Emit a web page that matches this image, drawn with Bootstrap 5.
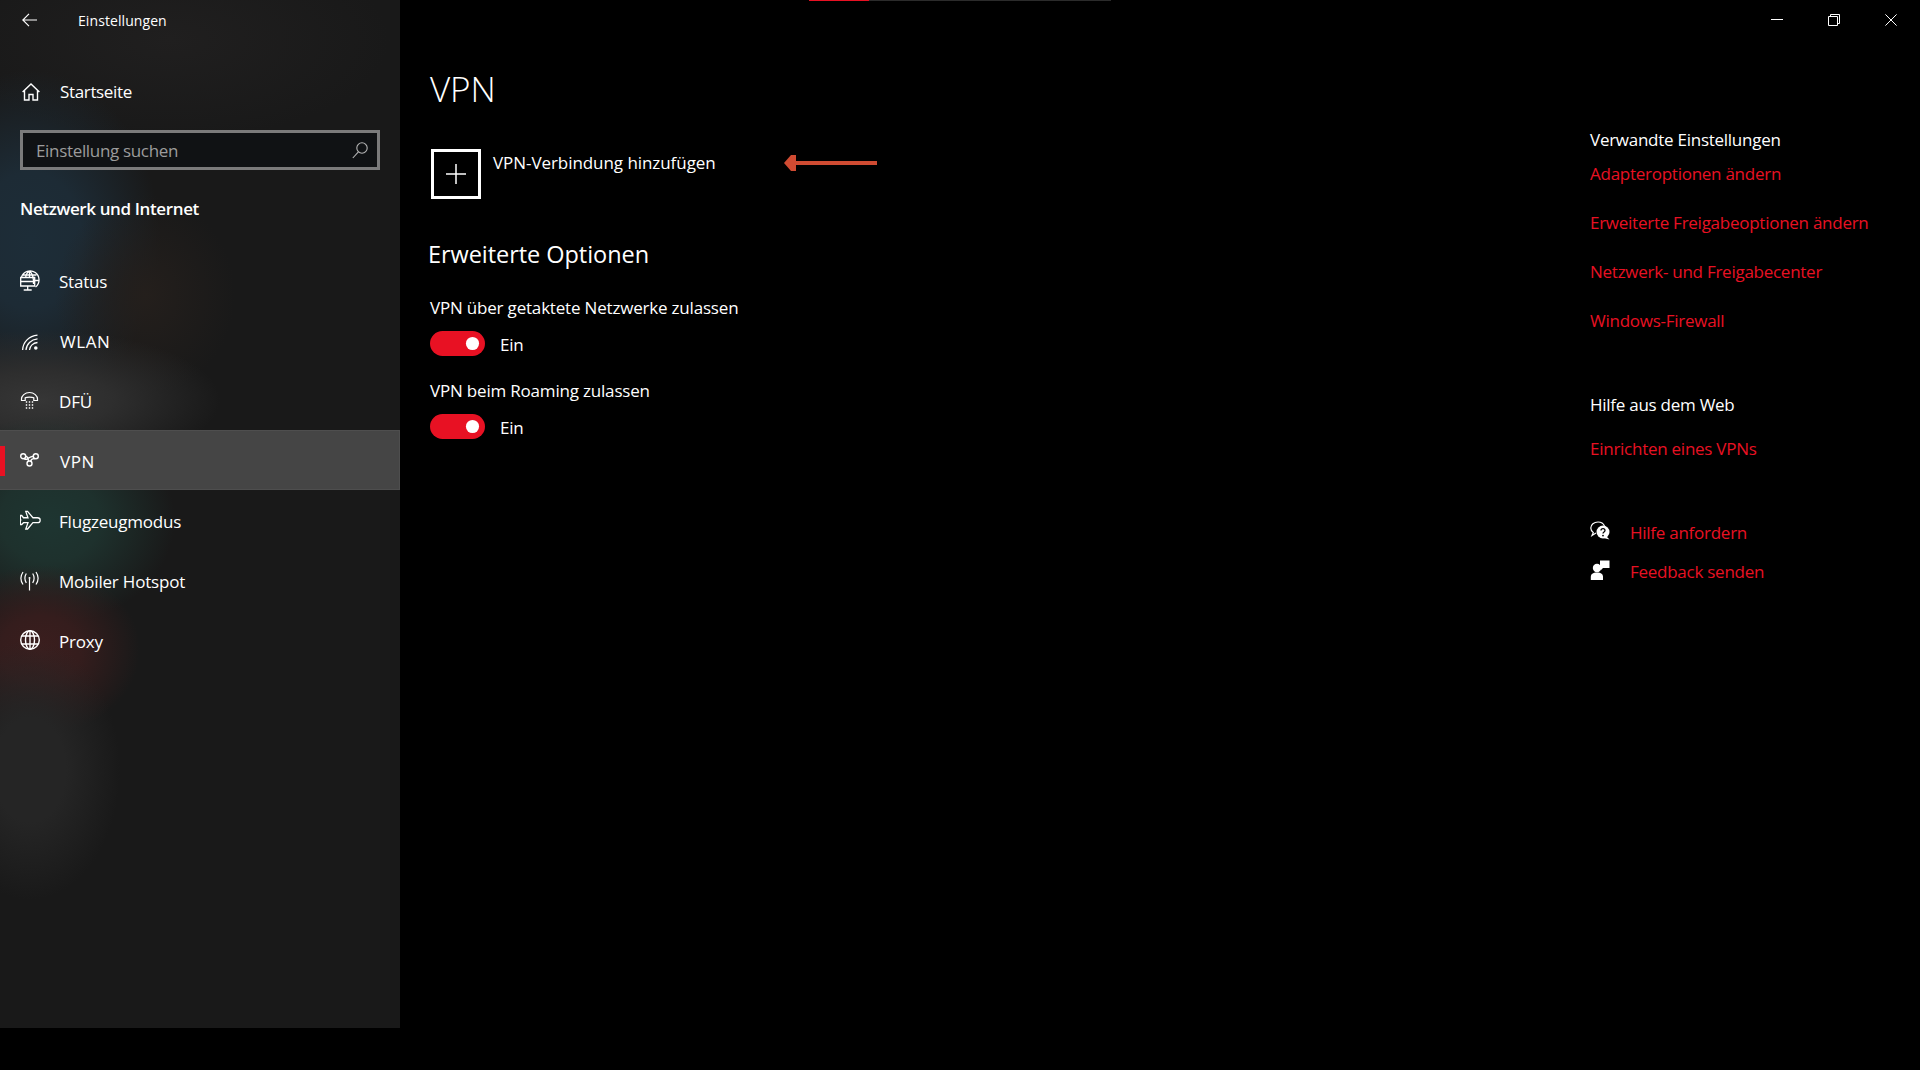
<!doctype html>
<html lang="de">
<head>
<meta charset="utf-8">
<title>Einstellungen</title>
<link href="https://cdn.jsdelivr.net/npm/bootstrap@5.3.0/dist/css/bootstrap.min.css" rel="stylesheet">
<style>
html,body{height:100%}
body{background:#000;color:#fff;font-family:"Open Sans","Noto Sans",sans-serif;font-size:17px;overflow:hidden;letter-spacing:-.19px}
svg{display:block;flex:none;fill:none;stroke:#fff}
.win-shell{height:1070px;position:relative}
.side-pane{width:400px;height:1028px;flex:none;background-color:#191919;background-image:
 radial-gradient(ellipse 90px 130px at 30px 770px,#252525 0,#252525 40%,rgba(38,38,38,0) 100%),
 radial-gradient(ellipse 100px 85px at 40px 650px,#3b1e1e 0,#351d1d 40%,rgba(50,28,28,0) 100%),
 radial-gradient(ellipse 125px 105px at 50px 520px,#1e3531 0,#1e312d 40%,rgba(30,48,44,0) 100%),
 radial-gradient(ellipse 180px 70px at 40px 400px,#363636 0,#2e2e2e 40%,rgba(48,48,48,0) 100%),
 radial-gradient(ellipse 90px 100px at 145px 295px,#241f1c 0,rgba(36,31,28,0) 100%),
 radial-gradient(ellipse 130px 170px at 30px 240px,#1d2d38 0,#1d2b35 40%,rgba(29,43,53,0) 100%),
 radial-gradient(ellipse 220px 100px at 170px 40px,#201f1f 0,rgba(32,31,31,0) 100%)}
.top-row{height:40px;padding-left:22px}
.app-name{font-size:14px;margin-left:41px;letter-spacing:.08px}
.home-link{height:60px;margin-top:22px;padding-left:22px;color:#fff;text-decoration:none;gap:20px;letter-spacing:-.35px}
.search-box{height:40px;width:360px;margin:8px 20px 0;border:3px solid #7b7b7b;background:#101214;padding:0 9px 0 13px}
.search-box svg{stroke:#b4b4b4}
.search-box .form-control{background:transparent;border:0;box-shadow:none;padding:2px 0 0;color:#a0a0a0;font-size:17px;letter-spacing:-.33px}
.search-box .form-control::placeholder{color:#9c9c9c;opacity:1}
.section-head{font-weight:600;font-size:17px;margin:24px 0 26px 20px;line-height:30px;letter-spacing:-.38px}
.side-link{height:60px;padding:0 0 0 20px;color:#fff;gap:15px;position:relative;font-size:17px;letter-spacing:-.2px}
.side-link span{padding-top:4px}
.side-link:hover,.side-link:focus{color:#fff}
.side-link .wide-label{letter-spacing:.6px;margin-left:1px}
.side-link.is-on{background:#454545;height:60px;border:1px solid #4e4e4e;border-left:0}
.side-link.is-on::before{content:"";position:absolute;left:0;top:15px;width:5px;height:30px;background:#e81123}
.loader-line{position:absolute;top:0;left:809px;width:302px;height:1px;background:#2b2b2b}
.loader-line i{display:block;width:60px;height:100%;background:#e81123}
.win-btns{height:40px;padding:0 23px 0 0;gap:45px}
.page-title{font-size:35px;font-weight:300;line-height:48px;margin:25px 0 0 30px;letter-spacing:-.1px}
.add-row{margin:36px 0 0 31px;gap:12px;color:#fff;text-decoration:none}
.add-tile{width:50px;height:50px;border:3px solid #fff}
.add-label{line-height:28px;font-size:17px;letter-spacing:-.06px}
.mark-arrow{margin-left:56px;margin-top:5px}
.sub-head{font-size:23.5px;line-height:34px;margin:38px 0 0 28px;letter-spacing:-.05px;font-weight:400}
.opt-block{margin-left:30px}
.opt-label{line-height:26px;font-size:17px;margin-top:24px}
.opt-label.next{margin-top:22px}
.opt-state{margin-top:10px;gap:15px;height:25px;line-height:25px}
.opt-state .form-check-label{padding-top:1px}
.opt-state .form-check-input{width:55px;height:25px;margin:0;border:0;border-radius:13px;flex:none;background-color:#e81123;background-size:contain;background-position:right center;
 background-image:url("data:image/svg+xml,%3csvg xmlns='http://www.w3.org/2000/svg' viewBox='-4 -4 8 8'%3e%3ccircle r='2.1' fill='%23fff'/%3e%3c/svg%3e");box-shadow:none}
.opt-state.form-switch{padding-left:0;min-height:0}
.side-info{width:330px;flex:none;padding-top:126px;font-size:17px;letter-spacing:-.26px;margin-top:-40px}
.info-head{line-height:28px;margin:0 0 6px}
.red-link{display:block;color:#e81123;text-decoration:none;line-height:28px}
.red-link+.red-link{margin-top:21px}
.info-head.help{margin-top:56px}
.help-links{margin-top:16px}
.help-extra{margin-top:50px}
.help-extra .red-link{margin:0}
.help-row{gap:20px;height:39px}
.help-row svg{margin-bottom:4px}
</style>
</head>
<body>
<div class="win-shell d-flex">
  <aside class="side-pane d-flex flex-column">
    <div class="top-row d-flex align-items-center">
      <svg width="15" height="14" viewBox="0 0 15 14" stroke-width="1.2"><path d="M15 7H.8M7 .8.8 7 7 13.2"/></svg>
      <span class="app-name">Einstellungen</span>
    </div>
    <a class="home-link d-flex align-items-center" href="#">
      <svg width="18" height="18" viewBox="0 0 18 18" stroke-width="1.4"><path d="M.6 9 9 1l8.4 8M2.5 7.5V17H7v-5.500h4V17h4.500V7.500"/></svg>
      <span>Startseite</span>
    </a>
    <form class="search-box d-flex align-items-center">
      <input class="form-control" type="text" placeholder="Einstellung suchen">
      <svg width="16" height="17" viewBox="0 0 16 17" stroke-width="1.1"><circle cx="10" cy="6" r="5.200"/><path d="M6.400 9.800 .8 16"/></svg>
    </form>
    <div class="section-head">Netzwerk und Internet</div>
    <nav class="nav flex-column">
      <a class="nav-link side-link d-flex align-items-center" href="#">
        <svg width="24" height="24" viewBox="0 0 24 24" stroke-width="1.300"><path d="M1.500 9A9 9 0 1 1 15.500 19M9.500 3v6M9.500 3C6.500 5 5.800 7.500 5.800 9M9.500 3c3.500 3 4.300 7 4 13M3 7h13.500M15 12.500h3.500"/><path d="M.7 9.500h14v8.500H.7zM.7 13.500h14M7.700 18v3.500M3.700 22h8"/></svg>
        <span>Status</span>
      </a>
      <a class="nav-link side-link d-flex align-items-center" href="#">
        <svg width="24" height="24" viewBox="0 0 24 24" stroke-width="1.300"><path d="M2.600 22C3 14 9 8 17.500 7.200M6 22c.4-6 5-10.500 11.500-11.200M9.500 22c.4-3.800 3.500-7 8-7.500"/><circle cx="15.800" cy="20" r="1.800" fill="#fff" stroke="none"/></svg>
        <span class="wide-label">WLAN</span>
      </a>
      <a class="nav-link side-link d-flex align-items-center" href="#">
        <svg width="24" height="24" viewBox="0 0 24 24" stroke-width="1.200"><path d="M1.500 11c0-3 3.300-6.500 8-6.500s8 3.500 8 6.500v1.500h-3.700V9.800C12 8.800 7 8.800 5.200 9.800v2.700H1.500z"/><path d="M5.800 14h1.400M8.800 14h1.400M11.800 14h1.400M5.800 17h1.400M8.800 17h1.400M11.800 17h1.400M5.800 20h1.400M8.800 20h1.400M11.800 20h1.400" stroke-width="1.400"/></svg>
        <span>DFÜ</span>
      </a>
      <a class="nav-link side-link is-on d-flex align-items-center" href="#">
        <svg width="24" height="24" viewBox="0 0 24 24" stroke-width="1.400"><circle cx="3.200" cy="8.200" r="2.500"/><circle cx="15.800" cy="8.200" r="2.500"/><circle cx="9.500" cy="15.500" r="2.500"/><path d="M5.700 8.200c2 .2 2.500 2 2.900 5M13.300 8.200C10.500 8.400 9 9.800 7.500 10.800c-1 .6-2 .6-3.200 0M10.600 13.200c.6-2 2-2.800 4.400-2.500"/></svg>
        <span class="wide-label">VPN</span>
      </a>
      <a class="nav-link side-link d-flex align-items-center" href="#">
        <svg width="24" height="24" viewBox="0 0 24 24" stroke-width="1.400"><g transform="translate(-1 1.200) scale(.9)"><path d="M23.500 12c0-1.300-1.300-2.500-3-2.500h-5L9.500 2.500H7.500l2.500 7H5L3 7H1.500v4l.5 1-.5 1v4H3l2-2h5l-2.500 7h2l6-7h5c1.700 0 3-1.200 3-2.500z"/></g></svg>
        <span>Flugzeugmodus</span>
      </a>
      <a class="nav-link side-link d-flex align-items-center" href="#">
        <svg width="24" height="24" viewBox="0 0 24 24" stroke-width="1.200"><path d="M9.500 11v11.500"/><circle cx="9.500" cy="10" r="1" fill="#fff" stroke="none"/><path d="M6.300 5.500c-1.700 2.800-1.700 6.500 0 9.500M12.700 5.500c1.700 2.800 1.700 6.500 0 9.500M3 4C.3 8 .3 12.500 3 16.500M16 4c2.700 4 2.700 8.500 0 12.500"/></svg>
        <span>Mobiler Hotspot</span>
      </a>
      <a class="nav-link side-link d-flex align-items-center" href="#">
        <svg width="24" height="24" viewBox="0 0 24 24" stroke-width="1.400"><circle cx="10" cy="12" r="9.300"/><ellipse cx="10" cy="12" rx="4.500" ry="9.300"/><path d="M10 2.700v18.600M1.800 8h16.400M1.800 16h16.400"/></svg>
        <span>Proxy</span>
      </a>
    </nav>
  </aside>

  <div class="loader-line"><i></i></div>

  <div class="flex-grow-1 d-flex flex-column">
    <div class="win-btns d-flex align-items-center justify-content-end">
      <svg width="12" height="12" viewBox="0 0 12 12"><path d="M0 5.500h12"/></svg>
      <svg width="12" height="12" viewBox="0 0 12 12"><path d="M.5 2.500h9v9h-9zM2.500 2.500V.5h9v9h-2"/></svg>
      <svg width="12" height="12" viewBox="0 0 12 12"><path d="m.4.4 11.200 11.200M11.600.4.4 11.600"/></svg>
    </div>
    <div class="d-flex flex-grow-1">
      <main class="flex-grow-1">
        <h1 class="page-title">VPN</h1>
        <a class="add-row d-flex align-items-start" href="#">
          <span class="add-tile d-flex align-items-center justify-content-center">
            <svg width="20" height="20" viewBox="0 0 20 20" stroke-width="1.500"><path d="M10 0v20M0 10h20"/></svg>
          </span>
          <span class="add-label">VPN-Verbindung hinzufügen</span>
          <svg class="mark-arrow" width="93" height="18" viewBox="0 0 93 18"><path d="M0 9 7 1h5v6h81v4H12v6H7z" fill="#d04b32" stroke="none"/></svg>
        </a>
        <h2 class="sub-head">Erweiterte Optionen</h2>
        <div class="opt-block">
          <div class="opt-label">VPN über getaktete Netzwerke zulassen</div>
          <div class="form-check form-switch opt-state d-flex align-items-center">
            <input class="form-check-input" type="checkbox" role="switch" id="sw1" checked>
            <label class="form-check-label" for="sw1">Ein</label>
          </div>
          <div class="opt-label next">VPN beim Roaming zulassen</div>
          <div class="form-check form-switch opt-state d-flex align-items-center">
            <input class="form-check-input" type="checkbox" role="switch" id="sw2" checked>
            <label class="form-check-label" for="sw2">Ein</label>
          </div>
        </div>
      </main>
      <aside class="side-info">
        <p class="info-head">Verwandte Einstellungen</p>
        <div>
          <a class="red-link" href="#">Adapteroptionen ändern</a>
          <a class="red-link" href="#">Erweiterte Freigabeoptionen ändern</a>
          <a class="red-link" href="#">Netzwerk- und Freigabecenter</a>
          <a class="red-link" href="#">Windows-Firewall</a>
        </div>
        <p class="info-head help">Hilfe aus dem Web</p>
        <div class="help-links"><a class="red-link" href="#">Einrichten eines VPNs</a></div>
        <div class="help-extra">
          <div class="help-row d-flex align-items-center">
            <svg width="20" height="20" viewBox="0 0 20 20" stroke-width="1.200"><path d="M8 1C4 1 .8 3.500.8 7c0 2 1 3.500 2.500 4.500L2 14.500l4-2.500"/><path d="M8 1c3 0 5.500 1.500 6.500 4"/><circle cx="13" cy="11" r="6.500" fill="#fff" stroke="none"/><path d="m16 15 3.500 3.500-6-1.500z" fill="#fff" stroke="none"/><path d="M11 9.500c0-2.500 4-2.500 4 0 0 1.500-2 1.500-2 3" stroke="#000" stroke-width="1.300"/><circle cx="13" cy="14.600" r=".9" fill="#000" stroke="none"/></svg>
            <a class="red-link" href="#">Hilfe anfordern</a>
          </div>
          <div class="help-row d-flex align-items-center">
            <svg width="20" height="20" viewBox="0 0 20 20"><g stroke="none" fill="#fff"><circle cx="7" cy="8" r="4.200"/><path d="M.8 20v-3c0-3 2-4.500 6.200-4.500s6 1.500 6 4.500v3z"/><path d="M10 .5h9.500v7.500H13l-2.500 2.500V7.500H10z"/></g></svg>
            <a class="red-link" href="#">Feedback senden</a>
          </div>
        </div>
      </aside>
    </div>
  </div>
</div>
<script src="https://cdn.jsdelivr.net/npm/bootstrap@5.3.0/dist/js/bootstrap.bundle.min.js"></script>
</body>
</html>
